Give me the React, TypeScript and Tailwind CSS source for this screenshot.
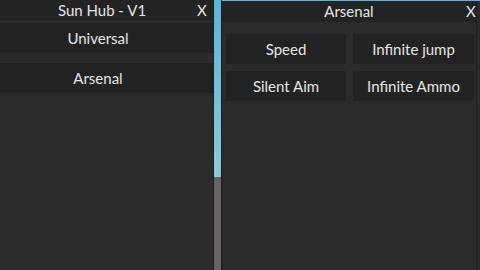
const font = { fontFamily: "Lato, 'Noto Sans', sans-serif" };

function LeftButton({ label }: { label: string }) {
  return (
    <div className="h-[30px] bg-[#222222] flex items-center justify-center pr-2 text-[15px] text-[#e6e6e6]">
      {label}
    </div>
  );
}

function RightButton({ label, wide }: { label: string; wide?: boolean }) {
  return (
    <div
      className={`h-[30px] ${wide ? "w-[121px]" : "w-[120px]"} bg-[#222222] flex items-center justify-center text-[15px] text-[#e6e6e6]`}
    >
      {label}
    </div>
  );
}

export default function App() {
  return (
    <div className="w-[480px] h-[270px] overflow-hidden flex bg-[#2b2b2b]" style={font}>
      {/* Left window */}
      <div className="ml-[-9px] w-[222px] shrink-0 flex flex-col">
        <div className="h-[20px] bg-[#232323] flex items-center relative text-[15px] text-[#e6e6e6]">
          <span className="w-full text-center">Sun Hub - V1</span>
          <span className="absolute left-[206px] top-0 leading-[20px]">X</span>
        </div>
        <div className="flex flex-col gap-[10px] pt-[3px]">
          <LeftButton label="Universal" />
          <LeftButton label="Arsenal" />
        </div>
      </div>

      {/* Scrollbar */}
      <div className="w-px bg-[#1c1c1c] shrink-0" />
      <div className="w-[7px] shrink-0 flex flex-col">
        <div className="h-[177px] bg-gradient-to-b from-[#58b6d8] to-[#8dcad8]" />
        <div className="flex-1 bg-[#686265]" />
      </div>
      <div className="w-px bg-[#1c1c1c] shrink-0" />

      {/* Right window */}
      <div className="flex flex-col flex-1">
        <div className="h-px bg-[#5ab6d6]" />
        <div className="flex flex-1">
          <div className="w-[254px] flex flex-col">
            <div className="h-[21px] bg-[#232323] relative flex items-center justify-center text-[15px] text-[#e6e6e6]">
              <span>Arsenal</span>
              <span className="absolute left-[244px] top-0 leading-[21px]">X</span>
            </div>
            <div className="pt-[12px] pl-[4px] flex flex-col gap-[7px]">
              <div className="flex gap-[7px]">
                <RightButton label="Speed" />
                <RightButton label="Infinite jump" wide />
              </div>
              <div className="flex gap-[7px]">
                <RightButton label="Silent Aim" />
                <RightButton label="Infinite Ammo" wide />
              </div>
            </div>
          </div>
          <div className="w-px bg-[#1f1f1f]" />
          <div className="flex-1 bg-[#2a2a2a]" />
        </div>
      </div>
    </div>
  );
}
